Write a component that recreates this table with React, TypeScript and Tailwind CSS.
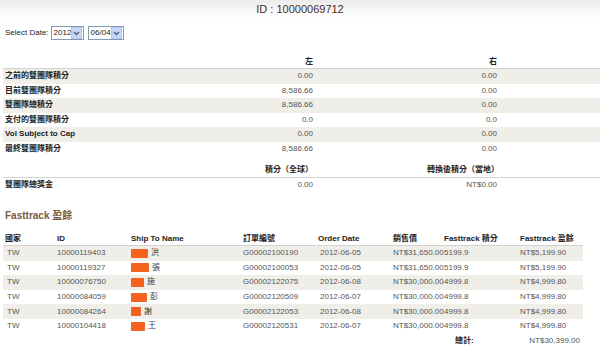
import React from "react";

const summaryRows = [
  ["之前的雙團隊積分", "0.00", "0.00"],
  ["目前雙團隊積分", "8,586.66", "0.00"],
  ["雙團隊總積分", "8,586.66", "0.00"],
  ["支付的雙團隊積分", "0.0", "0.0"],
  ["Vol Subject to Cap", "0.00", "0.00"],
  ["最終雙團隊積分", "8,586.66", "0.00"],
];

interface Order {
  country: string;
  id: string;
  redact: number;
  name: string;
  orderNo: string;
  date: string;
  price: string;
  points: string;
  surplus: string;
}

const orders: Order[] = [
  { country: "TW", id: "10000119403", redact: 17, name: "洪", orderNo: "G00002100190", date: "2012-06-05", price: "NT$31,650.00", points: "5199.9", surplus: "NT$5,199.90" },
  { country: "TW", id: "10000119327", redact: 18, name: "張", orderNo: "G00002100053", date: "2012-06-05", price: "NT$31,650.00", points: "5199.9", surplus: "NT$5,199.90" },
  { country: "TW", id: "10000076750", redact: 13, name: "施", orderNo: "G00002122075", date: "2012-06-08", price: "NT$30,000.00", points: "4999.8", surplus: "NT$4,999.80" },
  { country: "TW", id: "10000084059", redact: 16, name: "彭", orderNo: "G00002120509", date: "2012-06-07", price: "NT$30,000.00", points: "4999.8", surplus: "NT$4,999.80" },
  { country: "TW", id: "10000084264", redact: 10, name: "謝", orderNo: "G00002122053", date: "2012-06-08", price: "NT$30,000.00", points: "4999.8", surplus: "NT$4,999.80" },
  { country: "TW", id: "10000104418", redact: 14, name: "王", orderNo: "G00002120531", date: "2012-06-07", price: "NT$30,000.00", points: "4999.8", surplus: "NT$4,999.80" },
];

const FakeSelect = ({ value, width }: { value: string; width: string }) => (
  <div className={`${width} h-[14px] flex items-center border border-[#7f9db9] bg-white`}>
    <span className="flex-1 pl-[2px] text-[8px] text-[#222] leading-none">{value}</span>
    <span className="w-[11px] h-[12px] mr-[1px] flex items-center justify-center bg-[#c6d6f5] border border-[#b0c4ee]">
      <svg width="7" height="5" viewBox="0 0 7 5">
        <path d="M1 1 L3.5 3.5 L6 1" stroke="#4d6185" strokeWidth="1.4" fill="none" />
      </svg>
    </span>
  </div>
);

export default function App() {
  return (
    <div className="w-[600px] h-[355px] overflow-hidden bg-white text-[8px] text-[#555] font-['Liberation_Sans','Noto_Sans_CJK_TC',sans-serif]">
      <div className="h-[18px] bg-linear-to-b from-[#ececec] to-white flex items-center justify-center text-[11px] text-[#4a2f22]">
        ID : 10000069712
      </div>

      <div className="mt-[8px] h-[14px] pl-[5px] flex items-center text-[#222]">
        <span className="mr-[2px]">Select Date:</span>
        <FakeSelect value="2012" width="w-[33px]" />
        <div className="w-[4px]" />
        <FakeSelect value="06/04" width="w-[36px]" />
      </div>

      <div className="mt-[16px] ml-[3px]">
        <div className="grid grid-cols-[180px_133px_184px_1fr] h-[13px] items-center border-b border-[#d2d2d2] font-bold text-[#222]">
          <span />
          <span className="text-right pr-[3px]">左</span>
          <span className="text-right pr-[3px]">右</span>
          <span />
        </div>
        {summaryRows.map((row, i) => (
          <div
            key={i}
            className={`grid grid-cols-[180px_133px_184px_1fr] h-[14.5px] items-center ${i % 2 === 0 ? "bg-[#efeee9]" : "bg-white"}`}
          >
            <span className="pl-[2px] font-bold text-[#222]">{row[0]}</span>
            <span className="text-right pr-[3px]">{row[1]}</span>
            <span className="text-right pr-[3px]">{row[2]}</span>
            <span />
          </div>
        ))}
      </div>

      <div className="mt-[7px] ml-[3px]">
        <div className="grid grid-cols-[180px_133px_184px_1fr] h-[15px] items-center border-b border-[#d2d2d2] font-bold text-[#222]">
          <span />
          <span className="text-right pr-[3px]">積分（全球）</span>
          <span className="text-right pr-[1px]">轉換後積分（當地）</span>
          <span />
        </div>
        <div className="grid grid-cols-[180px_133px_184px_1fr] h-[14px] items-center">
          <span className="pl-[2px] font-bold text-[#222]">雙團隊總獎金</span>
          <span className="text-right pr-[3px]">0.00</span>
          <span className="text-right pr-[3px]">NT$0.00</span>
          <span />
        </div>
      </div>

      <div className="mt-[16px] pl-[5px] h-[14px] flex items-center text-[10px] font-bold text-[#7a5a40]">
        Fasttrack 盈餘
      </div>

      <div className="mt-[11px] ml-[3px] w-[580px]">
        <div className="grid grid-cols-[51px_74px_112px_75px_75px_51px_76px_66px] h-[13px] items-center border-b border-[#d2d2d2] font-bold text-[#222] whitespace-nowrap">
          <span className="pl-[2px]">國家</span>
          <span className="pl-[3px]">ID</span>
          <span className="pl-[3px]">Ship To Name</span>
          <span className="pl-[3px]">訂單編號</span>
          <span className="pl-[3px]">Order Date</span>
          <span className="pl-[3px]">銷售價</span>
          <span className="pl-[3px]">Fasttrack 積分</span>
          <span className="pl-[3px]">Fasttrack 盈餘</span>
        </div>
        {orders.map((o, i) => (
          <div
            key={o.orderNo}
            className={`grid grid-cols-[51px_74px_112px_75px_75px_51px_76px_66px] h-[14.6px] items-center whitespace-nowrap ${i % 2 === 0 ? "bg-[#efeee9]" : "bg-white"}`}
          >
            <span className="pl-[4px]">{o.country}</span>
            <span className="pl-[3px]">{o.id}</span>
            <span className="pl-[3px] flex items-center">
              <span
                className="inline-block h-[9px] bg-[#f4621f] mr-[3px] rounded-[1px]"
                style={{ width: o.redact }}
              />
              <span className="text-[#333]">{o.name}</span>
            </span>
            <span className="pl-[3px]">{o.orderNo}</span>
            <span className="pl-[5px]">{o.date}</span>
            <span className="pl-[3px]">{o.price}</span>
            <span className="pl-[3px]">{o.points}</span>
            <span className="pl-[3px]">{o.surplus}</span>
          </div>
        ))}
        <div className="grid grid-cols-[51px_74px_112px_75px_75px_51px_76px_66px] h-[14px] items-center whitespace-nowrap">
          <span />
          <span />
          <span />
          <span />
          <span />
          <span />
          <span className="pl-[14px] font-bold text-[#222]">總計:</span>
          <span className="text-right pr-[3px]">NT$30,399.00</span>
        </div>
      </div>
    </div>
  );
}
